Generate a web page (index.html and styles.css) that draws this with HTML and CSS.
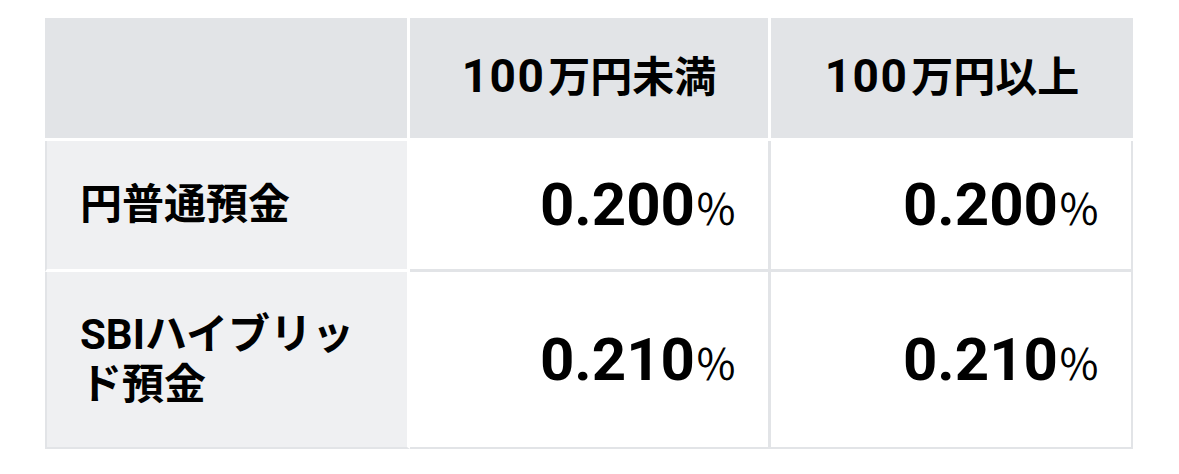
FILE: index.html
```html
<!DOCTYPE html>
<html lang="ja">
<head>
<meta charset="utf-8">
<title>金利</title>
<link rel="stylesheet" href="styles.css">
</head>
<body>
<div class="rates">
  <div class="cell corner"></div>
  <div class="cell head mid"><span class="digits">100</span>万円未満</div>
  <div class="cell head"><span class="digits">100</span>万円以上</div>

  <div class="cell label">円普通預金</div>
  <div class="cell rate mid"><span class="num">0.200</span><span class="pct">％</span></div>
  <div class="cell rate end"><span class="num">0.200</span><span class="pct">％</span></div>

  <div class="cell label last">SBIハイブリッド預金</div>
  <div class="cell rate mid last"><span class="num">0.210</span><span class="pct">％</span></div>
  <div class="cell rate end last"><span class="num">0.210</span><span class="pct">％</span></div>
</div>
</body>
</html>
```

FILE: styles.css
```css
* { box-sizing: border-box; }
html, body { margin: 0; padding: 0; background: #fff; }
body {
  font-family: Roboto, "Noto Sans CJK JP", sans-serif;
  color: #000;
}
.rates {
  display: grid;
  grid-template-columns: 365px 361px 362px;
  grid-template-rows: 123px 131px 177px;
  margin: 18px 0 0 45px;
  width: 1088px;
}
.cell {
  display: flex;
  align-items: center;
}
.corner {
  background: #e2e4e7;
  border-right: 3px solid #fff;
  border-bottom: 3px solid #fff;
}
.head {
  background: #e2e4e7;
  border-bottom: 3px solid #fff;
  justify-content: center;
  align-items: baseline;
  align-content: center;
  flex-wrap: wrap;
  font-weight: 700;
  font-size: 42px;
  line-height: 1.2;
  padding-bottom: 2px;
}
.head .digits {
  font-size: 46px;
  letter-spacing: 1.5px;
  margin-right: 3px;
}
.head.mid { border-right: 3px solid #fff; }
.label {
  background: #eff0f2;
  border-left: 2px solid #e2e4e7;
  border-right: 3px solid #fff;
  border-bottom: 3px solid #fff;
  padding: 0 30px 0 33px;
  font-weight: 700;
  font-size: 42px;
  line-height: 50px;
}
.label.last { border-bottom: 2px solid #e2e4e7; }
.rate {
  justify-content: flex-end;
  align-items: baseline;
  align-content: center;
  flex-wrap: wrap;
  padding-right: 31px;
  border-bottom: 3px solid #e2e4e7;
}
.rate.last { border-bottom-width: 2px; }
.rate.mid { border-right: 3px solid #e2e4e7; }
.rate.end { border-right: 2px solid #e2e4e7; }
.num {
  font-weight: 700;
  font-size: 60px;
  line-height: 1;
}
.pct {
  font-family: "Noto Sans CJK JP", sans-serif;
  font-weight: 400;
  font-size: 42px;
  line-height: 1;
}
```
